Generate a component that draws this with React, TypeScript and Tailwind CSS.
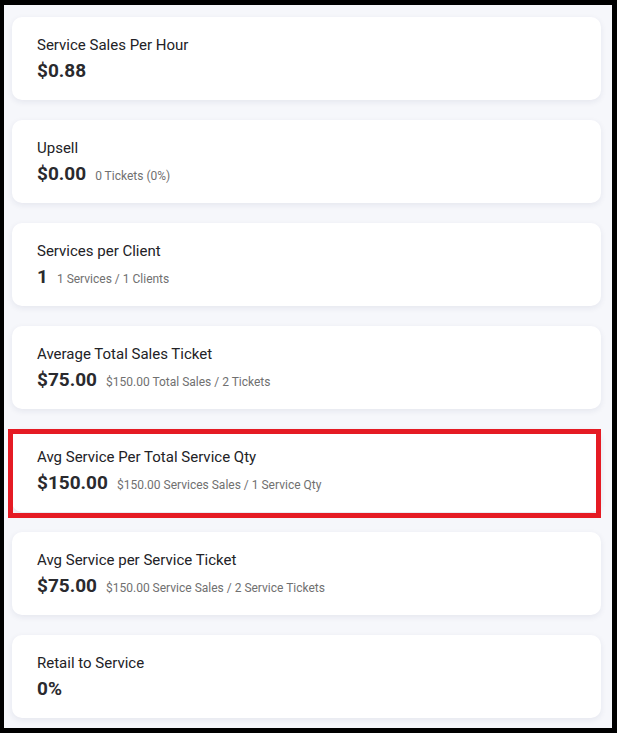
const stats = [
  { title: 'Service Sales Per Hour', value: '$0.88', note: '' },
  { title: 'Upsell', value: '$0.00', note: '0 Tickets (0%)' },
  { title: 'Services per Client', value: '1', note: '1 Services / 1 Clients' },
  { title: 'Average Total Sales Ticket', value: '$75.00', note: '$150.00 Total Sales / 2 Tickets' },
  { title: 'Avg Service Per Total Service Qty', value: '$150.00', note: '$150.00 Services Sales / 1 Service Qty', highlight: true },
  { title: 'Avg Service per Service Ticket', value: '$75.00', note: '$150.00 Service Sales / 2 Service Tickets' },
  { title: 'Retail to Service', value: '0%', note: '' },
];

function StatCard({ title, value, note, highlight }: { title: string; value: string; note: string; highlight?: boolean }) {
  return (
    <div className="relative">
      <div className="h-[83px] rounded-[10px] bg-white pl-[25px] pt-[18px] shadow-[0_2px_6px_rgba(30,40,90,0.08)]">
        <div className="text-[15px] leading-[20px] text-[#222226]">{title}</div>
        <div className="mt-[4px] flex items-baseline">
          <span className="text-[19px] font-bold leading-[24px] text-[#2a2a2e]">{value}</span>
          {note && <span className="ml-[9px] text-[12px] text-[#707070]">{note}</span>}
        </div>
      </div>
      {/* annotation box */}
      {highlight && <div className="absolute -left-[4px] right-0 top-0 -bottom-[6px] border-[5px] border-[#e51b24]" />}
    </div>
  );
}

export default function App() {
  return (
    <div className="h-[733px] w-[617px] overflow-hidden bg-black pb-[5px] pl-[4px] pr-[5px] pt-[5px] font-['Roboto',sans-serif]">
      <div className="h-full overflow-hidden bg-[#f6f7fb] pl-[8px] pr-[11px] pt-[12px]">
        <div className="flex flex-col gap-[20px]">
          {stats.map((s) => (
            <StatCard key={s.title} {...s} />
          ))}
        </div>
      </div>
    </div>
  );
}
